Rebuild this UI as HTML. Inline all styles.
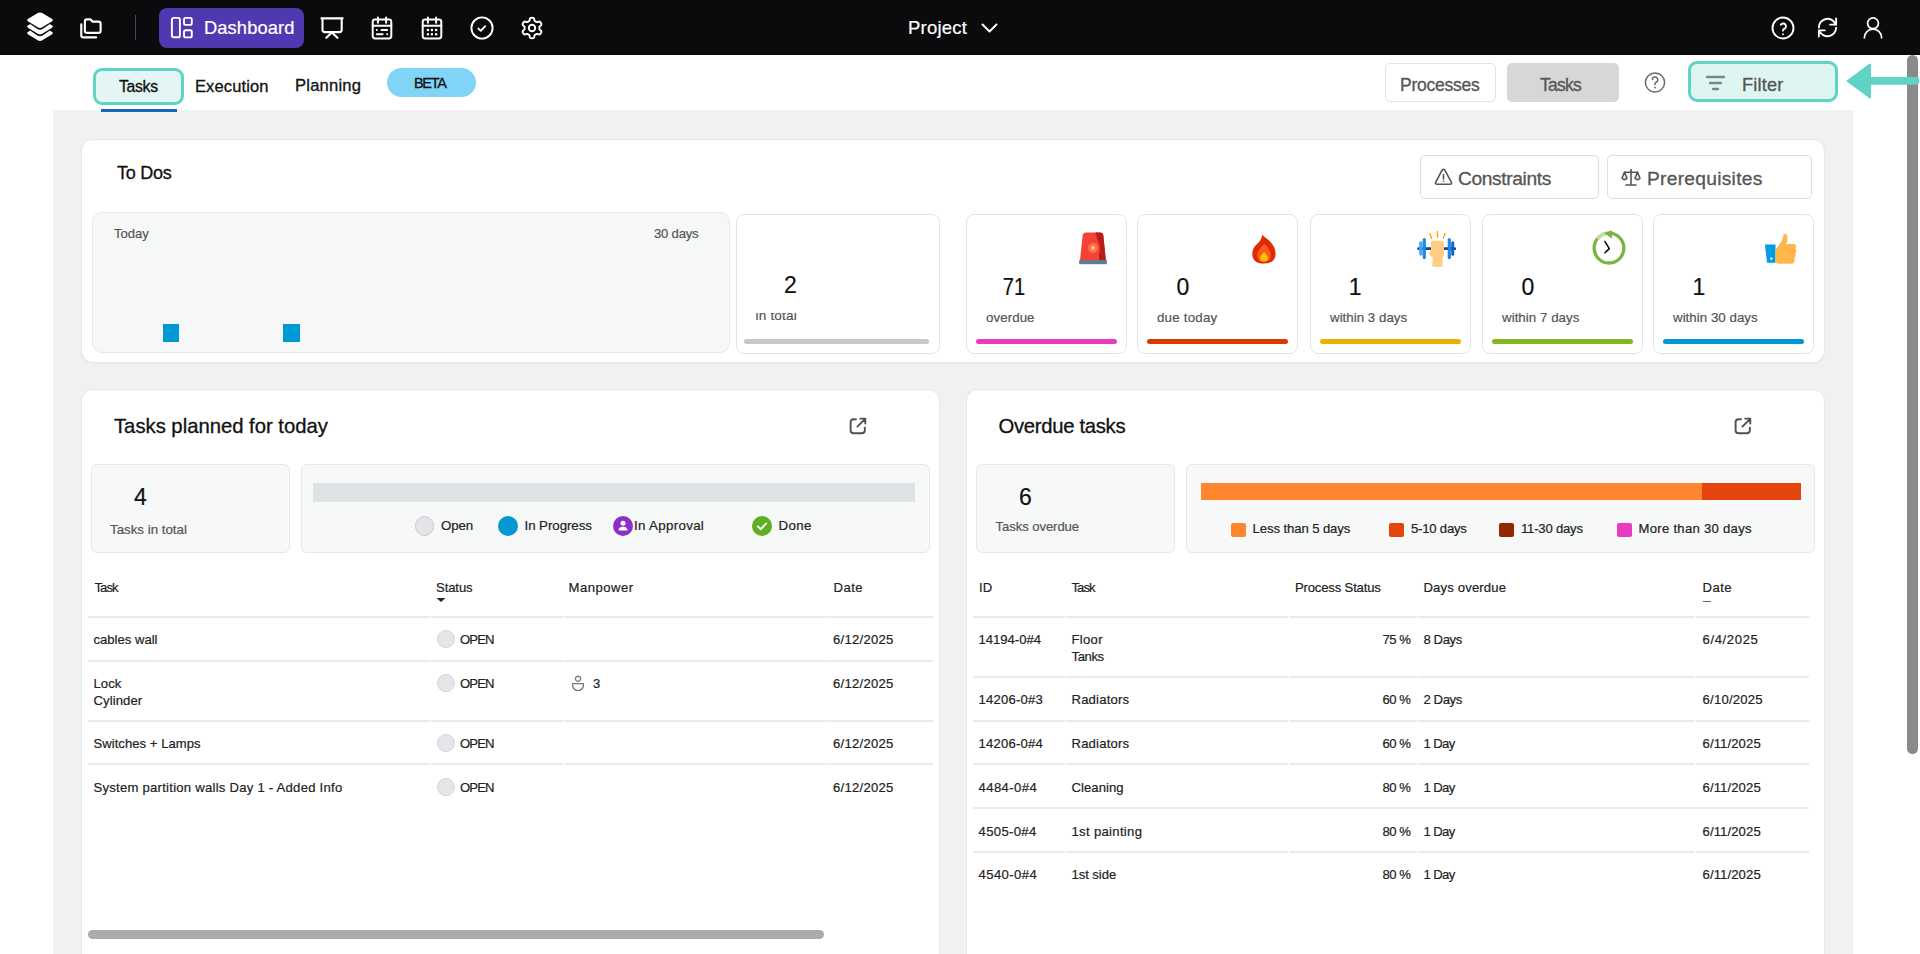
<!DOCTYPE html>
<html><head><meta charset="utf-8"><style>
html,body{margin:0;padding:0;width:1920px;height:954px;overflow:hidden;background:#fff;font-family:"Liberation Sans", sans-serif;}
</style></head><body>
<div style="position:absolute;left:0px;top:0px;width:1920px;height:55px;background:#0b0b0d;"></div>
<svg style="position:absolute;left:20px;top:8px;" width="40" height="38" viewBox="20 8 40 38"><path d="M28.24 31.84 L37.76 26.06 Q40.00 24.70 42.24 26.06 L51.76 31.84 Q54.00 33.20 51.76 34.56 L42.24 40.34 Q40.00 41.70 37.76 40.34 L28.24 34.56 Q26.00 33.20 28.24 31.84 Z" fill="#fff"/><path d="M26.67 25.04 L37.46 17.99 Q40.00 16.33 42.54 17.99 L53.33 25.04 Q55.87 26.70 53.33 28.36 L42.54 35.41 Q40.00 37.07 37.46 35.41 L26.67 28.36 Q24.13 26.70 26.67 25.04 Z" fill="#0b0b0d"/><path d="M28.24 25.34 L37.76 19.56 Q40.00 18.20 42.24 19.56 L51.76 25.34 Q54.00 26.70 51.76 28.06 L42.24 33.84 Q40.00 35.20 37.76 33.84 L28.24 28.06 Q26.00 26.70 28.24 25.34 Z" fill="#fff"/><path d="M26.67 18.54 L37.46 11.49 Q40.00 9.83 42.54 11.49 L53.33 18.54 Q55.87 20.20 53.33 21.86 L42.54 28.91 Q40.00 30.57 37.46 28.91 L26.67 21.86 Q24.13 20.20 26.67 18.54 Z" fill="#0b0b0d"/><path d="M28.24 18.84 L37.76 13.06 Q40.00 11.70 42.24 13.06 L51.76 18.84 Q54.00 20.20 51.76 21.56 L42.24 27.34 Q40.00 28.70 37.76 27.34 L28.24 21.56 Q26.00 20.20 28.24 18.84 Z" fill="#fff"/></svg>
<svg style="position:absolute;left:77px;top:16px;" width="27" height="26" viewBox="0 0 24 23"><g fill="none" stroke="#fff" stroke-width="1.9" stroke-linecap="round" stroke-linejoin="round"><path d="M9 3h3l2 2h5a2 2 0 0 1 2 2v6a2 2 0 0 1 -2 2h-10a2 2 0 0 1 -2 -2v-8a2 2 0 0 1 2 -2"/><path d="M17 19h-11.2a2 2 0 0 1 -2 -2v-9.6"/></g></svg>
<div style="position:absolute;left:135px;top:15px;width:1px;height:25px;background:#4a4a4e;"></div>
<div style="position:absolute;left:159px;top:8px;width:145px;height:40px;background:#5039b0;border-radius:8px;"></div>
<svg style="position:absolute;left:170px;top:16px;" width="23" height="23" viewBox="0 0 23 23"><g fill="none" stroke="#fff" stroke-width="1.9" stroke-linejoin="round"><rect x="1.9" y="1.9" width="8" height="19.4" rx="1.6"/><rect x="14" y="1.9" width="7.8" height="7" rx="1.6"/><rect x="14" y="14.2" width="7.8" height="7.2" rx="1.6"/></g></svg>
<div style="position:absolute;left:204px;top:18.51px;font-size:18.3px;line-height:18.3px;color:#fff;font-weight:400;white-space:nowrap;-webkit-text-stroke:0.2px #fff;letter-spacing:0.117px;">Dashboard</div>
<svg style="position:absolute;left:319.5px;top:15.5px;" width="24" height="24" viewBox="0 0 24 24"><g fill="none" stroke="#fff" stroke-width="2.1" stroke-linecap="round" stroke-linejoin="round"><path d="M1.5 2.4h21.1"/><path d="M2.5 2.4v11.7a2 2 0 0 0 2 2h15.2a2 2 0 0 0 2 -2v-11.7"/><path d="M6.3 21.8l5.5 -5.4l5.7 5.4"/></g></svg>
<svg style="position:absolute;left:369.5px;top:15.5px;" width="24" height="24" viewBox="0 0 24 24"><g fill="none" stroke="#fff" stroke-width="2.0" stroke-linecap="round" stroke-linejoin="round"><rect x="2.7" y="3.5" width="18.6" height="19" rx="2.4"/><path d="M7.9 1.5v5.2M16.1 1.5v5.2M2.7 9.8h18.6"/><path d="M6.8 14h0.05M11.5 14h5.6M6.9 18.3h5.7M17.2 18.3h0.05"/></g></svg>
<svg style="position:absolute;left:419.5px;top:15.5px;" width="24" height="24" viewBox="0 0 24 24"><g fill="none" stroke="#fff" stroke-width="2.0" stroke-linecap="round" stroke-linejoin="round"><rect x="2.7" y="3.5" width="18.6" height="19" rx="2.4"/><path d="M7.9 1.5v5.2M16.1 1.5v5.2M2.7 9.8h18.6"/></g><g fill="none" stroke="#fff" stroke-width="2.5" stroke-linecap="round"><path d="M7.9 14h0.05M11.9 14h0.05M16.1 14h0.05M7.9 18.3h0.05M11.9 18.3h0.05M16.1 18.3h0.05"/></g></svg>
<svg style="position:absolute;left:469.5px;top:15.5px;" width="24" height="24" viewBox="0 0 24 24"><g fill="none" stroke="#fff" stroke-width="1.9" stroke-linecap="round" stroke-linejoin="round"><circle cx="12" cy="12" r="10.6"/><path d="M8.4 12.6l2.4 2.2l4.4 -4.6"/></g></svg>
<svg style="position:absolute;left:519.5px;top:15.5px;" width="24" height="24" viewBox="0 0 24 24"><g fill="none" stroke="#fff" stroke-width="1.95" stroke-linecap="round" stroke-linejoin="round"><path d="M12.00 1.80 L12.27 1.81 L12.53 1.82 L12.80 1.85 L13.06 1.90 L13.32 1.97 L13.57 2.09 L13.80 2.27 L14.01 2.56 L14.17 2.98 L14.28 3.50 L14.36 4.02 L14.46 4.44 L14.57 4.73 L14.71 4.94 L14.87 5.08 L15.03 5.20 L15.19 5.30 L15.36 5.40 L15.53 5.50 L15.70 5.59 L15.87 5.69 L16.03 5.79 L16.20 5.88 L16.38 5.98 L16.56 6.06 L16.76 6.12 L17.01 6.14 L17.32 6.09 L17.73 5.96 L18.22 5.78 L18.73 5.62 L19.17 5.54 L19.52 5.58 L19.80 5.69 L20.02 5.84 L20.22 6.03 L20.39 6.23 L20.55 6.45 L20.70 6.67 L20.83 6.90 L20.96 7.13 L21.08 7.37 L21.19 7.62 L21.28 7.87 L21.34 8.13 L21.37 8.40 L21.32 8.70 L21.18 9.02 L20.89 9.37 L20.50 9.72 L20.09 10.06 L19.78 10.35 L19.58 10.60 L19.47 10.82 L19.42 11.02 L19.40 11.22 L19.40 11.42 L19.40 11.61 L19.40 11.81 L19.40 12.00 L19.40 12.19 L19.40 12.39 L19.40 12.58 L19.40 12.78 L19.42 12.98 L19.47 13.18 L19.58 13.40 L19.78 13.65 L20.09 13.94 L20.50 14.28 L20.89 14.63 L21.18 14.98 L21.32 15.30 L21.37 15.60 L21.34 15.87 L21.28 16.13 L21.19 16.38 L21.08 16.63 L20.96 16.87 L20.83 17.10 L20.70 17.33 L20.55 17.55 L20.39 17.77 L20.22 17.97 L20.02 18.16 L19.80 18.31 L19.52 18.42 L19.17 18.46 L18.73 18.38 L18.22 18.22 L17.73 18.04 L17.32 17.91 L17.01 17.86 L16.76 17.88 L16.56 17.94 L16.38 18.02 L16.20 18.12 L16.03 18.21 L15.87 18.31 L15.70 18.41 L15.53 18.50 L15.36 18.60 L15.19 18.70 L15.03 18.80 L14.87 18.92 L14.71 19.06 L14.57 19.27 L14.46 19.56 L14.36 19.98 L14.28 20.50 L14.17 21.02 L14.01 21.44 L13.80 21.73 L13.57 21.91 L13.32 22.03 L13.06 22.10 L12.80 22.15 L12.53 22.18 L12.27 22.19 L12.00 22.20 L11.73 22.19 L11.47 22.18 L11.20 22.15 L10.94 22.10 L10.68 22.03 L10.43 21.91 L10.20 21.73 L9.99 21.44 L9.83 21.02 L9.72 20.50 L9.64 19.98 L9.54 19.56 L9.43 19.27 L9.29 19.06 L9.13 18.92 L8.97 18.80 L8.81 18.70 L8.64 18.60 L8.47 18.50 L8.30 18.41 L8.13 18.31 L7.97 18.21 L7.80 18.12 L7.62 18.02 L7.44 17.94 L7.24 17.88 L6.99 17.86 L6.68 17.91 L6.27 18.04 L5.78 18.22 L5.27 18.38 L4.83 18.46 L4.48 18.42 L4.20 18.31 L3.98 18.16 L3.78 17.97 L3.61 17.77 L3.45 17.55 L3.30 17.33 L3.17 17.10 L3.04 16.87 L2.92 16.63 L2.81 16.38 L2.72 16.13 L2.66 15.87 L2.63 15.60 L2.68 15.30 L2.82 14.98 L3.11 14.63 L3.50 14.28 L3.91 13.94 L4.22 13.65 L4.42 13.40 L4.53 13.18 L4.58 12.98 L4.60 12.78 L4.60 12.58 L4.60 12.39 L4.60 12.19 L4.60 12.00 L4.60 11.81 L4.60 11.61 L4.60 11.42 L4.60 11.22 L4.58 11.02 L4.53 10.82 L4.42 10.60 L4.22 10.35 L3.91 10.06 L3.50 9.72 L3.11 9.37 L2.82 9.02 L2.68 8.70 L2.63 8.40 L2.66 8.13 L2.72 7.87 L2.81 7.62 L2.92 7.37 L3.04 7.13 L3.17 6.90 L3.30 6.67 L3.45 6.45 L3.61 6.23 L3.78 6.03 L3.98 5.84 L4.20 5.69 L4.48 5.58 L4.83 5.54 L5.27 5.62 L5.78 5.78 L6.27 5.96 L6.68 6.09 L6.99 6.14 L7.24 6.12 L7.44 6.06 L7.62 5.98 L7.80 5.88 L7.97 5.79 L8.13 5.69 L8.30 5.59 L8.47 5.50 L8.64 5.40 L8.81 5.30 L8.97 5.20 L9.13 5.08 L9.29 4.94 L9.43 4.73 L9.54 4.44 L9.64 4.02 L9.72 3.50 L9.83 2.98 L9.99 2.56 L10.20 2.27 L10.43 2.09 L10.68 1.97 L10.94 1.90 L11.20 1.85 L11.47 1.82 L11.73 1.81 L12.00 1.80Z"/><circle cx="12" cy="12" r="3.2"/></g></svg>
<div style="position:absolute;left:908px;top:18.94px;font-size:18.5px;line-height:18.5px;color:#fff;font-weight:400;white-space:nowrap;-webkit-text-stroke:0.2px #fff;letter-spacing:0.227px;">Project</div>
<svg style="position:absolute;left:980px;top:20.5px;" width="19" height="14" viewBox="0 0 19 14"><path d="M2.5 3.5l7 7l7 -7" fill="none" stroke="#fff" stroke-width="2" stroke-linecap="round" stroke-linejoin="round"/></svg>
<svg style="position:absolute;left:1770.5px;top:15.5px;" width="24" height="24" viewBox="0 0 24 24"><g fill="none" stroke="#fff" stroke-width="1.9" stroke-linecap="round" stroke-linejoin="round"><circle cx="12" cy="12" r="10.5"/><path d="M12 18.2v.01"/><path d="M12 14.6a1.6 1.6 0 0 1 1 -1.6a2.8 2.8 0 1 0 -3.2 -4.2"/></g></svg>
<svg style="position:absolute;left:1816.0px;top:16.0px;" width="23" height="23" viewBox="0 0 24 24"><g fill="none" stroke="#fff" stroke-width="1.95" stroke-linecap="round" stroke-linejoin="round"><path d="M3 12a9 9 0 0 1 17.4 -3.3"/><path d="M21 2.5v6.5h-6.2"/><path d="M21 12.2a9 9 0 0 1 -17.4 3.2"/><path d="M3 21.5v-6.5h6.2"/></g></svg>
<svg style="position:absolute;left:1861.5px;top:16.5px;" width="22" height="22" viewBox="0 0 24 24"><g fill="none" stroke="#fff" stroke-width="1.9" stroke-linecap="round" stroke-linejoin="round"><circle cx="12" cy="6.9" r="5.9"/><path d="M2.6 22.6a9.4 9.4 0 0 1 18.8 0"/></g></svg>
<div style="position:absolute;left:93px;top:68px;width:91px;height:37px;box-sizing:border-box;border:3px solid #5fd3c4;border-radius:9px;background:#e3f6f3;"></div>
<div style="position:absolute;left:119px;top:79.03px;font-size:15.8px;line-height:15.8px;color:#111;font-weight:400;white-space:nowrap;-webkit-text-stroke:0.3px #111;letter-spacing:-0.320px;">Tasks</div>
<div style="position:absolute;left:101px;top:109px;width:76px;height:3px;background:#1a63c6;"></div>
<div style="position:absolute;left:195px;top:77.73px;font-size:16.5px;line-height:16.5px;color:#111;font-weight:400;white-space:nowrap;-webkit-text-stroke:0.3px #111;letter-spacing:0.114px;">Execution</div>
<div style="position:absolute;left:295px;top:78.35px;font-size:16.6px;line-height:16.6px;color:#111;font-weight:400;white-space:nowrap;-webkit-text-stroke:0.3px #111;letter-spacing:0.192px;">Planning</div>
<div style="position:absolute;left:387px;top:68px;width:89px;height:29px;background:#80d4f5;border-radius:15px;"></div>
<div style="position:absolute;left:414px;top:76.43px;font-size:14.5px;line-height:14.5px;color:#111;font-weight:400;white-space:nowrap;-webkit-text-stroke:0.3px #111;letter-spacing:-1.308px;">BETA</div>
<div style="position:absolute;left:1385px;top:63px;width:111px;height:39px;box-sizing:border-box;border:1px solid #e2e2e2;border-radius:5px;background:#fff;"></div>
<div style="position:absolute;left:1400px;top:76.79px;font-size:17.5px;line-height:17.5px;color:#555;font-weight:400;white-space:nowrap;-webkit-text-stroke:0.3px #555;letter-spacing:-0.243px;">Processes</div>
<div style="position:absolute;left:1507px;top:63px;width:112px;height:39px;background:#d7d7d7;border-radius:5px;"></div>
<div style="position:absolute;left:1540px;top:76.79px;font-size:17.5px;line-height:17.5px;color:#555;font-weight:400;white-space:nowrap;-webkit-text-stroke:0.3px #555;letter-spacing:-0.771px;">Tasks</div>
<svg style="position:absolute;left:1644px;top:72px;" width="22" height="21" viewBox="0 0 22 21"><circle cx="11" cy="10.5" r="9.6" fill="none" stroke="#6a6a6a" stroke-width="1.5"/><path d="M8.4 7.6a2.7 2.7 0 1 1 3.6 2.6q-1 .5 -1 1.6v1" fill="none" stroke="#6a6a6a" stroke-width="1.5" stroke-linecap="round"/><circle cx="11" cy="15.6" r="0.95" fill="#6a6a6a"/></svg>
<div style="position:absolute;left:1688px;top:61px;width:150px;height:41px;box-sizing:border-box;border:3px solid #5fd3c4;border-radius:9px;background:#dff5f2;"></div>
<svg style="position:absolute;left:1705px;top:75px;" width="21" height="16" viewBox="0 0 21 16"><g stroke="#708b8b" stroke-width="2.3" stroke-linecap="round"><path d="M2 2h17M5 8h11M8 14h5"/></g></svg>
<div style="position:absolute;left:1742px;top:75.59px;font-size:18.2px;line-height:18.2px;color:#555;font-weight:400;white-space:nowrap;-webkit-text-stroke:0.3px #555;letter-spacing:0.168px;">Filter</div>
<div style="position:absolute;left:53px;top:110px;width:1800px;height:844px;background:#f0f2f2;"></div>
<div style="position:absolute;left:101px;top:109px;width:76px;height:3px;background:#1a63c6;"></div>
<div style="position:absolute;left:81px;top:139px;width:1744px;height:224px;box-sizing:border-box;background:#fff;border:1px solid #e5e7e9;border-radius:12px;box-shadow:0 1px 1px rgba(0,0,0,0.035);"></div>
<div style="position:absolute;left:117px;top:163.96px;font-size:18px;line-height:18px;color:#111;font-weight:400;white-space:nowrap;-webkit-text-stroke:0.3px #111;letter-spacing:-0.264px;">To Dos</div>
<div style="position:absolute;left:1420px;top:155px;width:179px;height:44px;box-sizing:border-box;border:1px solid #dedede;border-radius:5px;background:#fff;"></div>
<svg style="position:absolute;left:1434px;top:168px;" width="19" height="18" viewBox="0 0 19 18"><g fill="none" stroke="#555" stroke-width="1.6" stroke-linejoin="round" stroke-linecap="round"><path d="M8.1 2.2 L1.6 14.4 Q1 16.3 3 16.3 H16 Q18 16.3 17.4 14.4 L10.9 2.2 Q9.5 0.2 8.1 2.2 Z"/><path d="M9.5 6.6v4.3M9.5 13.3v.05"/></g></svg>
<div style="position:absolute;left:1458px;top:169.25px;font-size:19.2px;line-height:19.2px;color:#555;font-weight:400;white-space:nowrap;-webkit-text-stroke:0.3px #555;letter-spacing:-0.375px;">Constraints</div>
<div style="position:absolute;left:1607px;top:155px;width:205px;height:44px;box-sizing:border-box;border:1px solid #dedede;border-radius:5px;background:#fff;"></div>
<svg style="position:absolute;left:1621px;top:168px;" width="20" height="19" viewBox="0 0 20 19"><g fill="none" stroke="#555" stroke-width="1.6" stroke-linejoin="round" stroke-linecap="round"><path d="M10 1.5v15.5M5 17h10M3.5 4.2h13M10 3.2"/><path d="M3.5 4.2 L1 10.2 Q3.5 13 6 10.2 Z"/><path d="M16.5 4.2 L14 10.2 Q16.5 13 19 10.2 Z"/></g></svg>
<div style="position:absolute;left:1647px;top:169.25px;font-size:19.2px;line-height:19.2px;color:#555;font-weight:400;white-space:nowrap;-webkit-text-stroke:0.3px #555;letter-spacing:0.276px;">Prerequisites</div>
<div style="position:absolute;left:92px;top:212px;width:638px;height:141px;box-sizing:border-box;background:#f6f7f7;border:1px solid #e7e9e9;border-radius:10px;"></div>
<div style="position:absolute;left:114px;top:226.91px;font-size:13.1px;line-height:13.1px;color:#555;font-weight:400;white-space:nowrap;-webkit-text-stroke:0.2px #555;letter-spacing:-0.023px;">Today</div>
<div style="position:absolute;left:654px;top:226.91px;font-size:13.1px;line-height:13.1px;color:#555;font-weight:400;white-space:nowrap;-webkit-text-stroke:0.2px #555;letter-spacing:-0.202px;">30 days</div>
<div style="position:absolute;left:163px;top:324px;width:16px;height:18px;background:#0099d4;"></div>
<div style="position:absolute;left:283px;top:324px;width:17px;height:18px;background:#0099d4;"></div>
<div style="position:absolute;left:736px;top:214px;width:204px;height:140px;box-sizing:border-box;background:#fff;border:1px solid #e2e4e5;border-radius:8px;"></div>
<div style="position:absolute;left:690.5px;width:200px;text-align:center;top:273.83px;font-size:23px;line-height:23px;color:#111;font-weight:400;white-space:nowrap;-webkit-text-stroke:0.2px #111;">2</div>
<div style="position:absolute;left:740px;top:313px;width:120px;height:14px;overflow:hidden;">
<div style="position:absolute;left:15.5px;top:-4.51px;font-size:13.6px;line-height:13.6px;color:#555;font-weight:400;white-space:nowrap;-webkit-text-stroke:0.2px #555;letter-spacing:0.181px;">in total</div>
</div>
<div style="position:absolute;left:744px;top:339px;width:185px;height:5px;background:#c5c9cc;border-radius:3px;"></div>
<div style="position:absolute;left:966px;top:214px;width:161px;height:140px;box-sizing:border-box;background:#fff;border:1px solid #e2e4e5;border-radius:8px;"></div>
<div style="position:absolute;left:913.6px;width:200px;text-align:center;top:275.73px;font-size:23px;line-height:23px;color:#111;font-weight:400;white-space:nowrap;transform:scaleX(0.875);-webkit-text-stroke:0.2px #111;">71</div>
<div style="position:absolute;left:986px;top:311.04px;font-size:13.3px;line-height:13.3px;color:#555;font-weight:400;white-space:nowrap;-webkit-text-stroke:0.2px #555;letter-spacing:0.074px;">overdue</div>
<div style="position:absolute;left:976px;top:338.5px;width:141px;height:5.5px;background:#e83bbf;border-radius:3px;"></div>
<div style="position:absolute;left:1137px;top:214px;width:161px;height:140px;box-sizing:border-box;background:#fff;border:1px solid #e2e4e5;border-radius:8px;"></div>
<div style="position:absolute;left:1082.9px;width:200px;text-align:center;top:275.73px;font-size:23px;line-height:23px;color:#111;font-weight:400;white-space:nowrap;-webkit-text-stroke:0.2px #111;">0</div>
<div style="position:absolute;left:1157px;top:311.04px;font-size:13.3px;line-height:13.3px;color:#555;font-weight:400;white-space:nowrap;-webkit-text-stroke:0.2px #555;letter-spacing:0.218px;">due today</div>
<div style="position:absolute;left:1147px;top:338.5px;width:141px;height:5.5px;background:#d93a00;border-radius:3px;"></div>
<div style="position:absolute;left:1310px;top:214px;width:161px;height:140px;box-sizing:border-box;background:#fff;border:1px solid #e2e4e5;border-radius:8px;"></div>
<div style="position:absolute;left:1255.2px;width:200px;text-align:center;top:275.73px;font-size:23px;line-height:23px;color:#111;font-weight:400;white-space:nowrap;-webkit-text-stroke:0.2px #111;">1</div>
<div style="position:absolute;left:1330px;top:311.04px;font-size:13.3px;line-height:13.3px;color:#555;font-weight:400;white-space:nowrap;-webkit-text-stroke:0.2px #555;letter-spacing:0.024px;">within 3 days</div>
<div style="position:absolute;left:1320px;top:338.5px;width:141px;height:5.5px;background:#e8b300;border-radius:3px;"></div>
<div style="position:absolute;left:1482px;top:214px;width:161px;height:140px;box-sizing:border-box;background:#fff;border:1px solid #e2e4e5;border-radius:8px;"></div>
<div style="position:absolute;left:1427.9px;width:200px;text-align:center;top:275.73px;font-size:23px;line-height:23px;color:#111;font-weight:400;white-space:nowrap;-webkit-text-stroke:0.2px #111;">0</div>
<div style="position:absolute;left:1502px;top:311.04px;font-size:13.3px;line-height:13.3px;color:#555;font-weight:400;white-space:nowrap;-webkit-text-stroke:0.2px #555;letter-spacing:0.040px;">within 7 days</div>
<div style="position:absolute;left:1492px;top:338.5px;width:141px;height:5.5px;background:#86b71d;border-radius:3px;"></div>
<div style="position:absolute;left:1653px;top:214px;width:161px;height:140px;box-sizing:border-box;background:#fff;border:1px solid #e2e4e5;border-radius:8px;"></div>
<div style="position:absolute;left:1598.8px;width:200px;text-align:center;top:275.73px;font-size:23px;line-height:23px;color:#111;font-weight:400;white-space:nowrap;-webkit-text-stroke:0.2px #111;">1</div>
<div style="position:absolute;left:1673px;top:311.04px;font-size:13.3px;line-height:13.3px;color:#555;font-weight:400;white-space:nowrap;-webkit-text-stroke:0.2px #555;letter-spacing:0.030px;">within 30 days</div>
<div style="position:absolute;left:1663px;top:338.5px;width:141px;height:5.5px;background:#0098d6;border-radius:3px;"></div>
<svg style="position:absolute;left:1078px;top:231px;" width="30" height="34" viewBox="1078 231 30 34"><path d="M1082.7 235 Q1083 232.5 1085.5 232.5 H1100.5 Q1103 232.5 1103.3 235 L1105.8 260 H1080 Z" fill="#f44336"/>
<path d="M1095.5 232.5 H1100.5 Q1103 232.5 1103.3 235 L1105.8 260 H1099.2 L1098.8 254.2 Q1101.6 248 1097.8 240.5 L1097.3 239.6 Z" fill="#b71c1c"/>
<circle cx="1093" cy="247.9" r="5" fill="#ff7043"/><circle cx="1093" cy="247.9" r="1.8" fill="#ffccbc"/>
<rect x="1079.2" y="260" width="27.6" height="4.2" fill="#607d8b"/></svg>
<svg style="position:absolute;left:1250px;top:233px;" width="28" height="33" viewBox="1250 233 28 33"><path d="M1262.2 234.7 Q1263.5 236 1266 238 Q1275.6 245 1275.6 253.5 Q1275.6 263.6 1264 263.6 Q1252.3 263.6 1252.3 253.8 Q1252.3 248 1258 243 Q1261.5 240 1262.2 234.7 Z" fill="#dd2c00"/>
<path d="M1264.3 243.9 Q1271 250 1271 255 Q1271 261.8 1264 261.8 Q1257.2 261.8 1257.2 255.5 Q1257.2 250 1264.3 243.9 Z" fill="#ff5722"/>
<path d="M1264.3 251.9 Q1268 255.5 1268 258.2 Q1268 261.6 1264 261.6 Q1260 261.6 1260 258.5 Q1260 255.5 1264.3 251.9 Z" fill="#ffc107"/></svg>
<svg style="position:absolute;left:1415px;top:229px;" width="44" height="40" viewBox="1415 229 44 40"><rect x="1417.3" y="247.2" width="38.7" height="2.9" rx="1.2" fill="#0d47a1"/>
<rect x="1419.2" y="241.3" width="3.4" height="14.4" rx="1.7" fill="#42a5f5"/>
<rect x="1422.7" y="238" width="3.2" height="21.2" rx="1.6" fill="#1e88e5"/>
<rect x="1447.7" y="238" width="3.2" height="21.2" rx="1.6" fill="#1e88e5"/>
<rect x="1451.2" y="241.3" width="3.0" height="14.4" rx="1.5" fill="#1565c0"/>
<path d="M1431 242 Q1432 240.6 1433.5 241.2 Q1435 240 1436.5 241 Q1438 240.2 1439.5 241.1 Q1441 240.4 1442.5 241.3 Q1444 241.5 1444 243 V254.5 Q1444 256.6 1442.5 257 L1442.5 266.7 H1432.2 L1432.8 257.5 Q1430 256.5 1429.5 254 Q1429 251.5 1431 250.6 Z" fill="#ffcc80"/>
<g stroke="#ffa000" stroke-width="1.3" stroke-linecap="round"><path d="M1429.8 233.5 L1431.7 238.4"/><path d="M1437.4 231.4 L1437.5 237.3"/><path d="M1445.1 233.5 L1443.3 238.4"/></g></svg>
<svg style="position:absolute;left:1590px;top:228px;" width="40" height="40" viewBox="1590 228 40 40"><circle cx="1609" cy="248.1" r="14.9" fill="none" stroke="#7cb342" stroke-width="3.3"/>
<path d="M1597.5 238.9 A14.9 14.9 0 0 1 1605.5 233.6" fill="none" stroke="#c5e1a5" stroke-width="3.4"/>
<path d="M1605 233.6 L1611.9 229.9 L1611.9 238.8 Z" fill="#7cb342"/>
<path d="M1604.8 241.3 L1609.3 248.6 L1605 252.8" fill="none" stroke="#000" stroke-width="1.5" stroke-linecap="round" stroke-linejoin="round"/></svg>
<svg style="position:absolute;left:1762px;top:232px;" width="36" height="34" viewBox="1762 232 36 34"><path d="M1764.9 244.5 H1775.5 V262.8 H1767.1 Z" fill="#039be5"/>
<circle cx="1771.3" cy="258.6" r="1.3" fill="#fce4ec"/>
<path d="M1775.5 249.5 Q1781 243 1782.5 239 Q1783 234 1785 234 Q1787.5 234 1787.5 238 Q1787.5 242 1786 244 H1794 Q1796.4 244.5 1796.2 246.5 Q1796 248 1795.2 248.5 Q1796.6 249.5 1796.3 251.5 Q1796 253 1795 253.4 Q1796 254.6 1795.6 256 Q1795 257.5 1794.2 258 Q1795 259 1794.6 261 Q1794 263.7 1792 263.7 H1779.5 Q1776 263.7 1775.5 261.5 Z" fill="#ffb74d"/>
<g stroke="#ffa726" stroke-width="0.9"><path d="M1791 249.5h3.5M1790 254h3.5M1789 258.5h3.5"/></g></svg>
<div style="position:absolute;left:81px;top:389px;width:859px;height:600px;box-sizing:border-box;background:#fff;border:1px solid #e5e7e9;border-radius:12px;box-shadow:0 1px 1px rgba(0,0,0,0.035);"></div>
<div style="position:absolute;left:114px;top:415.82px;font-size:20.3px;line-height:20.3px;color:#111;font-weight:400;white-space:nowrap;-webkit-text-stroke:0.3px #111;letter-spacing:-0.017px;">Tasks planned for today</div>
<svg style="position:absolute;left:849px;top:417px;" width="18" height="18" viewBox="0 0 18 18"><g fill="none" stroke="#4b5156" stroke-width="1.9" stroke-linecap="round" stroke-linejoin="round"><path d="M7 2.2 H4.6 Q1.6 2.2 1.6 5.2 V13.2 Q1.6 16.3 4.6 16.3 H12.8 Q15.8 16.3 15.8 13.2 V10.6"/><path d="M8.4 9.6 L16.2 1.8 M11.2 1.6 H16.3 V6.6"/></g></svg>
<div style="position:absolute;left:91px;top:464px;width:199px;height:89px;box-sizing:border-box;background:#f7f8f8;border:1px solid #e6e8e9;border-radius:6px;"></div>
<div style="position:absolute;left:40.30000000000001px;width:200px;text-align:center;top:485.83px;font-size:23px;line-height:23px;color:#111;font-weight:400;white-space:nowrap;-webkit-text-stroke:0.2px #111;">4</div>
<div style="position:absolute;left:110px;top:523.04px;font-size:13.3px;line-height:13.3px;color:#555;font-weight:400;white-space:nowrap;-webkit-text-stroke:0.2px #555;letter-spacing:-0.000px;">Tasks in total</div>
<div style="position:absolute;left:301px;top:464px;width:629px;height:89px;box-sizing:border-box;background:#f7f8f8;border:1px solid #e6e8e9;border-radius:6px;"></div>
<div style="position:absolute;left:313px;top:482.5px;width:602px;height:19px;background:#e0e3e5;"></div>
<div style="position:absolute;left:414.5px;top:516px;width:19.5px;height:19.5px;box-sizing:border-box;border-radius:50%;background:#e3e5e8;border:1px solid #c9cbcd;"></div>
<div style="position:absolute;left:441px;top:518.94px;font-size:13.3px;line-height:13.3px;color:#222;font-weight:400;white-space:nowrap;-webkit-text-stroke:0.2px #222;letter-spacing:-0.111px;">Open</div>
<div style="position:absolute;left:498px;top:516px;width:20px;height:20px;box-sizing:border-box;border-radius:50%;background:#0099d4;"></div>
<div style="position:absolute;left:524.5px;top:518.94px;font-size:13.3px;line-height:13.3px;color:#222;font-weight:400;white-space:nowrap;-webkit-text-stroke:0.2px #222;letter-spacing:-0.054px;">In Progress</div>
<div style="position:absolute;left:613px;top:516px;width:20px;height:20px;box-sizing:border-box;border-radius:50%;background:#8e2ec9;"></div>
<svg style="position:absolute;left:613px;top:516px;" width="20" height="20" viewBox="0 0 20 20"><circle cx="10" cy="7.3" r="2.5" fill="#fff"/><path d="M5.5 14.6 Q5.5 10.8 10 10.8 Q14.5 10.8 14.5 14.6 Z" fill="#fff"/></svg>
<div style="position:absolute;left:634px;top:518.94px;font-size:13.3px;line-height:13.3px;color:#222;font-weight:400;white-space:nowrap;-webkit-text-stroke:0.2px #222;letter-spacing:0.329px;">In Approval</div>
<div style="position:absolute;left:751.5px;top:516px;width:20.3px;height:20.3px;box-sizing:border-box;border-radius:50%;background:#5fae24;"></div>
<svg style="position:absolute;left:751.5px;top:516px;" width="20" height="20" viewBox="0 0 20 20"><path d="M5.8 10.4 L8.8 13.2 L14.2 7.4" fill="none" stroke="#fff" stroke-width="1.9" stroke-linecap="round" stroke-linejoin="round"/></svg>
<div style="position:absolute;left:778.5px;top:518.94px;font-size:13.3px;line-height:13.3px;color:#222;font-weight:400;white-space:nowrap;-webkit-text-stroke:0.2px #222;letter-spacing:0.336px;">Done</div>
<div style="position:absolute;left:94.5px;top:581.11px;font-size:13.1px;line-height:13.1px;color:#222;font-weight:400;white-space:nowrap;-webkit-text-stroke:0.2px #222;letter-spacing:-0.925px;">Task</div>
<div style="position:absolute;left:436px;top:581.11px;font-size:13.1px;line-height:13.1px;color:#222;font-weight:400;white-space:nowrap;-webkit-text-stroke:0.2px #222;letter-spacing:-0.095px;">Status</div>
<svg style="position:absolute;left:436px;top:597px;" width="10" height="6" viewBox="0 0 10 6"><path d="M0.6 0.9 H9.4 L5 5.1 Z" fill="#222"/></svg>
<div style="position:absolute;left:568.5px;top:581.11px;font-size:13.1px;line-height:13.1px;color:#222;font-weight:400;white-space:nowrap;-webkit-text-stroke:0.2px #222;letter-spacing:0.504px;">Manpower</div>
<div style="position:absolute;left:833.5px;top:581.11px;font-size:13.1px;line-height:13.1px;color:#222;font-weight:400;white-space:nowrap;-webkit-text-stroke:0.2px #222;letter-spacing:0.475px;">Date</div>
<div style="position:absolute;left:88px;top:616px;width:342px;height:2px;background:#e8eaeb;"></div>
<div style="position:absolute;left:431px;top:616px;width:132px;height:2px;background:#e8eaeb;"></div>
<div style="position:absolute;left:564px;top:616px;width:262px;height:2px;background:#e8eaeb;"></div>
<div style="position:absolute;left:827px;top:616px;width:106px;height:2px;background:#e8eaeb;"></div>
<div style="position:absolute;left:93.5px;top:632.71px;font-size:13.1px;line-height:13.1px;color:#222;font-weight:400;white-space:nowrap;-webkit-text-stroke:0.2px #222;letter-spacing:-0.003px;">cables wall</div>
<div style="position:absolute;left:436.5px;top:630.2px;width:18px;height:18px;box-sizing:border-box;border-radius:50%;background:#e4e6e9;border:1px solid #d3d5d7;"></div>
<div style="position:absolute;left:460px;top:632.71px;font-size:13.1px;line-height:13.1px;color:#222;font-weight:400;white-space:nowrap;-webkit-text-stroke:0.2px #222;letter-spacing:-0.884px;">OPEN</div>
<div style="position:absolute;left:833px;top:632.71px;font-size:13.1px;line-height:13.1px;color:#222;font-weight:400;white-space:nowrap;-webkit-text-stroke:0.2px #222;letter-spacing:0.254px;">6/12/2025</div>
<div style="position:absolute;left:88px;top:660px;width:342px;height:2px;background:#e8eaeb;"></div>
<div style="position:absolute;left:431px;top:660px;width:132px;height:2px;background:#e8eaeb;"></div>
<div style="position:absolute;left:564px;top:660px;width:262px;height:2px;background:#e8eaeb;"></div>
<div style="position:absolute;left:827px;top:660px;width:106px;height:2px;background:#e8eaeb;"></div>
<div style="position:absolute;left:93.5px;top:676.71px;font-size:13.1px;line-height:13.1px;color:#222;font-weight:400;white-space:nowrap;-webkit-text-stroke:0.2px #222;letter-spacing:0.063px;">Lock</div>
<div style="position:absolute;left:93.5px;top:693.71px;font-size:13.1px;line-height:13.1px;color:#222;font-weight:400;white-space:nowrap;-webkit-text-stroke:0.2px #222;letter-spacing:0.090px;">Cylinder</div>
<div style="position:absolute;left:436.5px;top:674.2px;width:18px;height:18px;box-sizing:border-box;border-radius:50%;background:#e4e6e9;border:1px solid #d3d5d7;"></div>
<div style="position:absolute;left:460px;top:676.71px;font-size:13.1px;line-height:13.1px;color:#222;font-weight:400;white-space:nowrap;-webkit-text-stroke:0.2px #222;letter-spacing:-0.884px;">OPEN</div>
<svg style="position:absolute;left:571px;top:674.5px;" width="14" height="16" viewBox="0 0 14 16"><g fill="none" stroke="#777" stroke-width="1.3"><circle cx="7" cy="3.8" r="2.6"/><path d="M1.6 8.6 H12.4 V10.2 A5.4 5.4 0 0 1 1.6 10.2 Z"/></g></svg>
<div style="position:absolute;left:593px;top:676.71px;font-size:13.1px;line-height:13.1px;color:#222;font-weight:400;white-space:nowrap;-webkit-text-stroke:0.2px #222;">3</div>
<div style="position:absolute;left:833px;top:676.71px;font-size:13.1px;line-height:13.1px;color:#222;font-weight:400;white-space:nowrap;-webkit-text-stroke:0.2px #222;letter-spacing:0.254px;">6/12/2025</div>
<div style="position:absolute;left:88px;top:720px;width:342px;height:2px;background:#e8eaeb;"></div>
<div style="position:absolute;left:431px;top:720px;width:132px;height:2px;background:#e8eaeb;"></div>
<div style="position:absolute;left:564px;top:720px;width:262px;height:2px;background:#e8eaeb;"></div>
<div style="position:absolute;left:827px;top:720px;width:106px;height:2px;background:#e8eaeb;"></div>
<div style="position:absolute;left:93.5px;top:736.71px;font-size:13.1px;line-height:13.1px;color:#222;font-weight:400;white-space:nowrap;-webkit-text-stroke:0.2px #222;letter-spacing:0.029px;">Switches + Lamps</div>
<div style="position:absolute;left:436.5px;top:734.2px;width:18px;height:18px;box-sizing:border-box;border-radius:50%;background:#e4e6e9;border:1px solid #d3d5d7;"></div>
<div style="position:absolute;left:460px;top:736.71px;font-size:13.1px;line-height:13.1px;color:#222;font-weight:400;white-space:nowrap;-webkit-text-stroke:0.2px #222;letter-spacing:-0.884px;">OPEN</div>
<div style="position:absolute;left:833px;top:736.71px;font-size:13.1px;line-height:13.1px;color:#222;font-weight:400;white-space:nowrap;-webkit-text-stroke:0.2px #222;letter-spacing:0.254px;">6/12/2025</div>
<div style="position:absolute;left:88px;top:763px;width:342px;height:2px;background:#e8eaeb;"></div>
<div style="position:absolute;left:431px;top:763px;width:132px;height:2px;background:#e8eaeb;"></div>
<div style="position:absolute;left:564px;top:763px;width:262px;height:2px;background:#e8eaeb;"></div>
<div style="position:absolute;left:827px;top:763px;width:106px;height:2px;background:#e8eaeb;"></div>
<div style="position:absolute;left:93.5px;top:780.71px;font-size:13.1px;line-height:13.1px;color:#222;font-weight:400;white-space:nowrap;-webkit-text-stroke:0.2px #222;letter-spacing:0.249px;">System partition walls Day 1 - Added Info</div>
<div style="position:absolute;left:436.5px;top:778.2px;width:18px;height:18px;box-sizing:border-box;border-radius:50%;background:#e4e6e9;border:1px solid #d3d5d7;"></div>
<div style="position:absolute;left:460px;top:780.71px;font-size:13.1px;line-height:13.1px;color:#222;font-weight:400;white-space:nowrap;-webkit-text-stroke:0.2px #222;letter-spacing:-0.884px;">OPEN</div>
<div style="position:absolute;left:833px;top:780.71px;font-size:13.1px;line-height:13.1px;color:#222;font-weight:400;white-space:nowrap;-webkit-text-stroke:0.2px #222;letter-spacing:0.254px;">6/12/2025</div>
<div style="position:absolute;left:88px;top:929.5px;width:736px;height:9px;background:#acacac;border-radius:4.5px;"></div>
<div style="position:absolute;left:966px;top:389px;width:859px;height:600px;box-sizing:border-box;background:#fff;border:1px solid #e5e7e9;border-radius:12px;box-shadow:0 1px 1px rgba(0,0,0,0.035);"></div>
<div style="position:absolute;left:998.5px;top:415.82px;font-size:20.3px;line-height:20.3px;color:#111;font-weight:400;white-space:nowrap;-webkit-text-stroke:0.3px #111;letter-spacing:-0.310px;">Overdue tasks</div>
<svg style="position:absolute;left:1734px;top:417px;" width="18" height="18" viewBox="0 0 18 18"><g fill="none" stroke="#4b5156" stroke-width="1.9" stroke-linecap="round" stroke-linejoin="round"><path d="M7 2.2 H4.6 Q1.6 2.2 1.6 5.2 V13.2 Q1.6 16.3 4.6 16.3 H12.8 Q15.8 16.3 15.8 13.2 V10.6"/><path d="M8.4 9.6 L16.2 1.8 M11.2 1.6 H16.3 V6.6"/></g></svg>
<div style="position:absolute;left:976px;top:464px;width:199px;height:89px;box-sizing:border-box;background:#f7f8f8;border:1px solid #e6e8e9;border-radius:6px;"></div>
<div style="position:absolute;left:925.5px;width:200px;text-align:center;top:486.43px;font-size:23px;line-height:23px;color:#111;font-weight:400;white-space:nowrap;-webkit-text-stroke:0.2px #111;">6</div>
<div style="position:absolute;left:995.5px;top:520.11px;font-size:13.1px;line-height:13.1px;color:#555;font-weight:400;white-space:nowrap;-webkit-text-stroke:0.2px #555;letter-spacing:-0.070px;">Tasks overdue</div>
<div style="position:absolute;left:1186px;top:464px;width:629px;height:89px;box-sizing:border-box;background:#f7f8f8;border:1px solid #e6e8e9;border-radius:6px;"></div>
<div style="position:absolute;left:1201px;top:482.6px;width:500.5px;height:17.2px;background:#fd862f;"></div>
<div style="position:absolute;left:1701.5px;top:482.6px;width:99.5px;height:17.2px;background:#e4450f;"></div>
<div style="position:absolute;left:1231px;top:522.6px;width:14.5px;height:14.5px;background:#fd862f;border-radius:2px;"></div>
<div style="position:absolute;left:1252.5px;top:521.71px;font-size:13.1px;line-height:13.1px;color:#222;font-weight:400;white-space:nowrap;-webkit-text-stroke:0.2px #222;letter-spacing:-0.077px;">Less than 5 days</div>
<div style="position:absolute;left:1389px;top:522.6px;width:14.5px;height:14.5px;background:#e4450f;border-radius:2px;"></div>
<div style="position:absolute;left:1411px;top:521.71px;font-size:13.1px;line-height:13.1px;color:#222;font-weight:400;white-space:nowrap;-webkit-text-stroke:0.2px #222;letter-spacing:-0.207px;">5-10 days</div>
<div style="position:absolute;left:1499px;top:522.6px;width:14.5px;height:14.5px;background:#942600;border-radius:2px;"></div>
<div style="position:absolute;left:1521px;top:521.71px;font-size:13.1px;line-height:13.1px;color:#222;font-weight:400;white-space:nowrap;-webkit-text-stroke:0.2px #222;letter-spacing:-0.207px;">11-30 days</div>
<div style="position:absolute;left:1617px;top:522.6px;width:14.5px;height:14.5px;background:#e83bbf;border-radius:2px;"></div>
<div style="position:absolute;left:1638.5px;top:521.71px;font-size:13.1px;line-height:13.1px;color:#222;font-weight:400;white-space:nowrap;-webkit-text-stroke:0.2px #222;letter-spacing:0.287px;">More than 30 days</div>
<div style="position:absolute;left:979px;top:581.11px;font-size:13.1px;line-height:13.1px;color:#222;font-weight:400;white-space:nowrap;-webkit-text-stroke:0.2px #222;">ID</div>
<div style="position:absolute;left:1071.5px;top:581.11px;font-size:13.1px;line-height:13.1px;color:#222;font-weight:400;white-space:nowrap;-webkit-text-stroke:0.2px #222;letter-spacing:-0.925px;">Task</div>
<div style="position:absolute;left:1295px;top:581.11px;font-size:13.1px;line-height:13.1px;color:#222;font-weight:400;white-space:nowrap;-webkit-text-stroke:0.2px #222;letter-spacing:-0.170px;">Process Status</div>
<div style="position:absolute;left:1423.5px;top:581.11px;font-size:13.1px;line-height:13.1px;color:#222;font-weight:400;white-space:nowrap;-webkit-text-stroke:0.2px #222;letter-spacing:0.154px;">Days overdue</div>
<div style="position:absolute;left:1702.5px;top:581.11px;font-size:13.1px;line-height:13.1px;color:#222;font-weight:400;white-space:nowrap;-webkit-text-stroke:0.2px #222;letter-spacing:0.475px;">Date</div>
<div style="position:absolute;left:1703px;top:600.5px;width:8px;height:1.5px;background:#666;"></div>
<div style="position:absolute;left:973px;top:615.8px;width:92px;height:2px;background:#e8eaeb;"></div>
<div style="position:absolute;left:1066px;top:615.8px;width:222px;height:2px;background:#e8eaeb;"></div>
<div style="position:absolute;left:1289px;top:615.8px;width:128px;height:2px;background:#e8eaeb;"></div>
<div style="position:absolute;left:1418px;top:615.8px;width:277px;height:2px;background:#e8eaeb;"></div>
<div style="position:absolute;left:1696px;top:615.8px;width:113px;height:2px;background:#e8eaeb;"></div>
<div style="position:absolute;left:978.5px;top:633.41px;font-size:13.1px;line-height:13.1px;color:#222;font-weight:400;white-space:nowrap;-webkit-text-stroke:0.2px #222;letter-spacing:-0.017px;">14194-0#4</div>
<div style="position:absolute;left:1071.5px;top:632.91px;font-size:13.1px;line-height:13.1px;color:#222;font-weight:400;white-space:nowrap;-webkit-text-stroke:0.2px #222;letter-spacing:0.307px;">Floor</div>
<div style="position:absolute;left:1071.5px;top:649.91px;font-size:13.1px;line-height:13.1px;color:#222;font-weight:400;white-space:nowrap;-webkit-text-stroke:0.2px #222;letter-spacing:-0.389px;">Tanks</div>
<div style="position:absolute;left:1110.5px;width:300px;text-align:right;top:632.91px;font-size:13.1px;line-height:13.1px;color:#222;font-weight:400;white-space:nowrap;-webkit-text-stroke:0.2px #222;letter-spacing:-0.467px;">75 %</div>
<div style="position:absolute;left:1423.5px;top:632.91px;font-size:13.1px;line-height:13.1px;color:#222;font-weight:400;white-space:nowrap;-webkit-text-stroke:0.2px #222;letter-spacing:-0.401px;">8 Days</div>
<div style="position:absolute;left:1702.5px;top:633.41px;font-size:13.1px;line-height:13.1px;color:#222;font-weight:400;white-space:nowrap;-webkit-text-stroke:0.2px #222;letter-spacing:0.631px;">6/4/2025</div>
<div style="position:absolute;left:973px;top:675.8px;width:92px;height:2px;background:#e8eaeb;"></div>
<div style="position:absolute;left:1066px;top:675.8px;width:222px;height:2px;background:#e8eaeb;"></div>
<div style="position:absolute;left:1289px;top:675.8px;width:128px;height:2px;background:#e8eaeb;"></div>
<div style="position:absolute;left:1418px;top:675.8px;width:277px;height:2px;background:#e8eaeb;"></div>
<div style="position:absolute;left:1696px;top:675.8px;width:113px;height:2px;background:#e8eaeb;"></div>
<div style="position:absolute;left:978.5px;top:693.41px;font-size:13.1px;line-height:13.1px;color:#222;font-weight:400;white-space:nowrap;-webkit-text-stroke:0.2px #222;letter-spacing:0.221px;">14206-0#3</div>
<div style="position:absolute;left:1071.5px;top:692.91px;font-size:13.1px;line-height:13.1px;color:#222;font-weight:400;white-space:nowrap;-webkit-text-stroke:0.2px #222;letter-spacing:0.189px;">Radiators</div>
<div style="position:absolute;left:1110.5px;width:300px;text-align:right;top:692.91px;font-size:13.1px;line-height:13.1px;color:#222;font-weight:400;white-space:nowrap;-webkit-text-stroke:0.2px #222;letter-spacing:-0.467px;">60 %</div>
<div style="position:absolute;left:1423.5px;top:692.91px;font-size:13.1px;line-height:13.1px;color:#222;font-weight:400;white-space:nowrap;-webkit-text-stroke:0.2px #222;letter-spacing:-0.401px;">2 Days</div>
<div style="position:absolute;left:1702.5px;top:693.41px;font-size:13.1px;line-height:13.1px;color:#222;font-weight:400;white-space:nowrap;-webkit-text-stroke:0.2px #222;letter-spacing:0.229px;">6/10/2025</div>
<div style="position:absolute;left:973px;top:720px;width:92px;height:2px;background:#e8eaeb;"></div>
<div style="position:absolute;left:1066px;top:720px;width:222px;height:2px;background:#e8eaeb;"></div>
<div style="position:absolute;left:1289px;top:720px;width:128px;height:2px;background:#e8eaeb;"></div>
<div style="position:absolute;left:1418px;top:720px;width:277px;height:2px;background:#e8eaeb;"></div>
<div style="position:absolute;left:1696px;top:720px;width:113px;height:2px;background:#e8eaeb;"></div>
<div style="position:absolute;left:978.5px;top:737.41px;font-size:13.1px;line-height:13.1px;color:#222;font-weight:400;white-space:nowrap;-webkit-text-stroke:0.2px #222;letter-spacing:0.221px;">14206-0#4</div>
<div style="position:absolute;left:1071.5px;top:736.91px;font-size:13.1px;line-height:13.1px;color:#222;font-weight:400;white-space:nowrap;-webkit-text-stroke:0.2px #222;letter-spacing:0.189px;">Radiators</div>
<div style="position:absolute;left:1110.5px;width:300px;text-align:right;top:736.91px;font-size:13.1px;line-height:13.1px;color:#222;font-weight:400;white-space:nowrap;-webkit-text-stroke:0.2px #222;letter-spacing:-0.467px;">60 %</div>
<div style="position:absolute;left:1423.5px;top:736.91px;font-size:13.1px;line-height:13.1px;color:#222;font-weight:400;white-space:nowrap;-webkit-text-stroke:0.2px #222;letter-spacing:-0.614px;">1 Day</div>
<div style="position:absolute;left:1702.5px;top:737.41px;font-size:13.1px;line-height:13.1px;color:#222;font-weight:400;white-space:nowrap;-webkit-text-stroke:0.2px #222;letter-spacing:0.113px;">6/11/2025</div>
<div style="position:absolute;left:973px;top:763.2px;width:92px;height:2px;background:#e8eaeb;"></div>
<div style="position:absolute;left:1066px;top:763.2px;width:222px;height:2px;background:#e8eaeb;"></div>
<div style="position:absolute;left:1289px;top:763.2px;width:128px;height:2px;background:#e8eaeb;"></div>
<div style="position:absolute;left:1418px;top:763.2px;width:277px;height:2px;background:#e8eaeb;"></div>
<div style="position:absolute;left:1696px;top:763.2px;width:113px;height:2px;background:#e8eaeb;"></div>
<div style="position:absolute;left:978.5px;top:781.41px;font-size:13.1px;line-height:13.1px;color:#222;font-weight:400;white-space:nowrap;-webkit-text-stroke:0.2px #222;letter-spacing:0.407px;">4484-0#4</div>
<div style="position:absolute;left:1071.5px;top:780.91px;font-size:13.1px;line-height:13.1px;color:#222;font-weight:400;white-space:nowrap;-webkit-text-stroke:0.2px #222;letter-spacing:0.057px;">Cleaning</div>
<div style="position:absolute;left:1110.5px;width:300px;text-align:right;top:780.91px;font-size:13.1px;line-height:13.1px;color:#222;font-weight:400;white-space:nowrap;-webkit-text-stroke:0.2px #222;letter-spacing:-0.467px;">80 %</div>
<div style="position:absolute;left:1423.5px;top:780.91px;font-size:13.1px;line-height:13.1px;color:#222;font-weight:400;white-space:nowrap;-webkit-text-stroke:0.2px #222;letter-spacing:-0.614px;">1 Day</div>
<div style="position:absolute;left:1702.5px;top:781.41px;font-size:13.1px;line-height:13.1px;color:#222;font-weight:400;white-space:nowrap;-webkit-text-stroke:0.2px #222;letter-spacing:0.113px;">6/11/2025</div>
<div style="position:absolute;left:973px;top:807px;width:92px;height:2px;background:#e8eaeb;"></div>
<div style="position:absolute;left:1066px;top:807px;width:222px;height:2px;background:#e8eaeb;"></div>
<div style="position:absolute;left:1289px;top:807px;width:128px;height:2px;background:#e8eaeb;"></div>
<div style="position:absolute;left:1418px;top:807px;width:277px;height:2px;background:#e8eaeb;"></div>
<div style="position:absolute;left:1696px;top:807px;width:113px;height:2px;background:#e8eaeb;"></div>
<div style="position:absolute;left:978.5px;top:825.41px;font-size:13.1px;line-height:13.1px;color:#222;font-weight:400;white-space:nowrap;-webkit-text-stroke:0.2px #222;letter-spacing:0.350px;">4505-0#4</div>
<div style="position:absolute;left:1071.5px;top:824.91px;font-size:13.1px;line-height:13.1px;color:#222;font-weight:400;white-space:nowrap;-webkit-text-stroke:0.2px #222;letter-spacing:0.319px;">1st painting</div>
<div style="position:absolute;left:1110.5px;width:300px;text-align:right;top:824.91px;font-size:13.1px;line-height:13.1px;color:#222;font-weight:400;white-space:nowrap;-webkit-text-stroke:0.2px #222;letter-spacing:-0.467px;">80 %</div>
<div style="position:absolute;left:1423.5px;top:824.91px;font-size:13.1px;line-height:13.1px;color:#222;font-weight:400;white-space:nowrap;-webkit-text-stroke:0.2px #222;letter-spacing:-0.614px;">1 Day</div>
<div style="position:absolute;left:1702.5px;top:825.41px;font-size:13.1px;line-height:13.1px;color:#222;font-weight:400;white-space:nowrap;-webkit-text-stroke:0.2px #222;letter-spacing:0.113px;">6/11/2025</div>
<div style="position:absolute;left:973px;top:851px;width:92px;height:2px;background:#e8eaeb;"></div>
<div style="position:absolute;left:1066px;top:851px;width:222px;height:2px;background:#e8eaeb;"></div>
<div style="position:absolute;left:1289px;top:851px;width:128px;height:2px;background:#e8eaeb;"></div>
<div style="position:absolute;left:1418px;top:851px;width:277px;height:2px;background:#e8eaeb;"></div>
<div style="position:absolute;left:1696px;top:851px;width:113px;height:2px;background:#e8eaeb;"></div>
<div style="position:absolute;left:978.5px;top:868.41px;font-size:13.1px;line-height:13.1px;color:#222;font-weight:400;white-space:nowrap;-webkit-text-stroke:0.2px #222;letter-spacing:0.407px;">4540-0#4</div>
<div style="position:absolute;left:1071.5px;top:867.91px;font-size:13.1px;line-height:13.1px;color:#222;font-weight:400;white-space:nowrap;-webkit-text-stroke:0.2px #222;letter-spacing:-0.063px;">1st side</div>
<div style="position:absolute;left:1110.5px;width:300px;text-align:right;top:867.91px;font-size:13.1px;line-height:13.1px;color:#222;font-weight:400;white-space:nowrap;-webkit-text-stroke:0.2px #222;letter-spacing:-0.467px;">80 %</div>
<div style="position:absolute;left:1423.5px;top:867.91px;font-size:13.1px;line-height:13.1px;color:#222;font-weight:400;white-space:nowrap;-webkit-text-stroke:0.2px #222;letter-spacing:-0.614px;">1 Day</div>
<div style="position:absolute;left:1702.5px;top:868.41px;font-size:13.1px;line-height:13.1px;color:#222;font-weight:400;white-space:nowrap;-webkit-text-stroke:0.2px #222;letter-spacing:0.113px;">6/11/2025</div>
<div style="position:absolute;left:1907px;top:55.3px;width:11px;height:699px;background:#8a8a8a;border-radius:5.5px;"></div>
<svg style="position:absolute;left:1840px;top:55px;" width="80" height="50" viewBox="1840 55 80 50"><path d="M1847.6 81 L1870 64.5 L1870 97.4 Z" fill="#5fd3c4" stroke="#5fd3c4" stroke-width="2" stroke-linejoin="round"/><path d="M1866 80.85 H1915.5" stroke="#5fd3c4" stroke-width="7.7" stroke-linecap="round"/></svg>
</body></html>
